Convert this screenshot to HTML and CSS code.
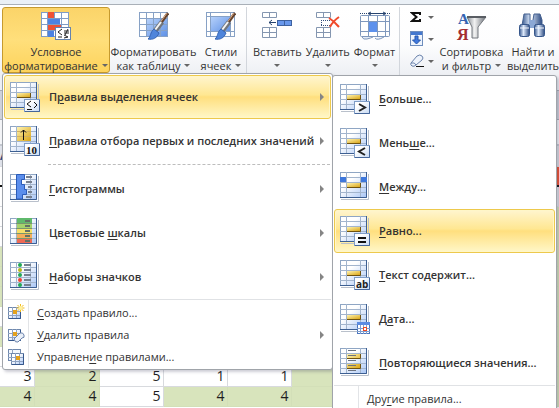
FILE: index.html
```html
<!DOCTYPE html>
<html lang="ru">
<head>
<meta charset="utf-8">
<title>Условное форматирование</title>
<link rel="stylesheet" href="styles.css">
</head>
<body>
<svg class="defs" aria-hidden="true">
  <defs>
    <linearGradient id="sheetFill" x1="0" y1="0" x2="1" y2="1"><stop offset=".35" stop-color="#fff"/><stop offset="1" stop-color="#a9c6f5"/></linearGradient>
    <linearGradient id="gold" x1="0" y1="0" x2="1" y2="1"><stop offset="0" stop-color="#fff3b0"/><stop offset="1" stop-color="#d9a414"/></linearGradient>
    <linearGradient id="blue" x1="0" y1="0" x2="1" y2="1"><stop offset="0" stop-color="#b5d0fa"/><stop offset="1" stop-color="#5f91e6"/></linearGradient>
    <linearGradient id="steel" x1="0" x2="1"><stop offset="0" stop-color="#8a8f96"/><stop offset=".4" stop-color="#f2f2f2"/><stop offset="1" stop-color="#6b7078"/></linearGradient>
    <linearGradient id="tube" x1="0" x2="1"><stop offset="0" stop-color="#38598f"/><stop offset=".4" stop-color="#dce8fa"/><stop offset="1" stop-color="#2c4a80"/></linearGradient>
    <linearGradient id="badgeFill" x1="0" y1="0" x2="1" y2="1"><stop offset=".3" stop-color="#fff"/><stop offset="1" stop-color="#c6d9f3"/></linearGradient>
    <symbol id="grid" viewBox="0 0 30 30">
      <path d="M1 27.500H28.500V2" fill="none" stroke="#b9c0cb"/>
      <rect x=".5" y=".5" width="26" height="25" fill="url(#sheetFill)" stroke="#8fa6c4"/>
      <path d="M6.500 0V26M20.500 0V26M0 5.500H27M0 10.500H27M0 15.500H27M0 20.500H27" stroke="#a3b5cd" fill="none"/>
      <path d="M0 25.500H26.500V0" fill="none" stroke="#3d5f92"/>
    </symbol>
    <symbol id="goldgrid" viewBox="0 0 30 30">
      <use href="#grid" width="30" height="30"/>
      <rect x="7" y="11" width="14" height="4" fill="url(#gold)"/><path d="M7 15.500H20.500V11" fill="none" stroke="#6f5310"/>
    </symbol>
    <symbol id="badge" viewBox="0 0 30 30"><rect x="14.500" y="17.500" width="15" height="12" fill="url(#badgeFill)" stroke="#7e9cc6"/><path d="M15 29.500H29.500V18" fill="none" stroke="#46679b"/></symbol>
    <symbol id="brush" viewBox="0 0 30 30">
      <path d="M19 15 29 1" stroke="#65432d" stroke-width="3"/><path d="M18 15 28 1" stroke="#d8a783"/>
      <path d="M16 19 23 10" stroke="#70757c" stroke-width="5"/><path d="M16 18 22 10" stroke="#f4f4f4" stroke-width="2"/>
      <path d="M9 27C12 25 11 20 15 17L20 21C18 26 14 28 9 27Z" fill="#4f85db" stroke="#3564b4"/>
    </symbol>
    <symbol id="mini" viewBox="0 0 18 18">
      <rect x=".5" y="3.500" width="12" height="11" fill="url(#sheetFill)" stroke="#6f88ad"/><path d="M4.500 3V15M8.500 3V15M0 7.500H13M0 11.500H13" stroke="#8fa3c2"/><path d="M1 14.500H12.500V4" fill="none" stroke="#37588c"/><rect x="5" y="6" width="4" height="4" fill="#e3a11c"/>
    </symbol>
  </defs>
</svg>

<main class="window">
  <header class="ribbon" aria-label="Лента">
    <div class="group styles">
      <button class="tool active w-cond">
        <svg class="big" viewBox="0 0 30 30"><rect x=".5" y=".5" width="27" height="24" fill="#fff" stroke="#7f9cc6"/><rect x="7" y="0" width="6" height="6" fill="#ef5234"/><rect x="7" y="7" width="12" height="5" fill="#4d83e2"/><rect x="7" y="13" width="13" height="5" fill="#ef5234"/><rect x="7" y="19" width="6" height="6" fill="#4d83e2"/><path d="M6.500 0V25M13.500 0V6M20.500 0V25M0 6.500H28M0 12.500H28M0 18.500H28" stroke="#7f9cc6" fill="none"/><rect x="14.500" y="15.500" width="15" height="12" fill="#fff" stroke="#6483af"/><path d="M21 17 17 20 21 23M17 25H21M23 19H28M23 21H28M27 17 24 23M23 23 27 25 23 26" fill="none" stroke="#222"/></svg>
        <span>Условное<br>форматирование<i class="arrow"></i></span>
      </button>
      <button class="tool w-table">
        <svg class="big" viewBox="0 0 30 30"><rect x=".5" y=".5" width="28" height="24" fill="#fff" stroke="#87a1c5"/><rect x="8" y="7" width="20" height="17" fill="url(#blue)"/><path d="M7.500 0V25M14.500 0V25M21.500 0V25M0 6.500H29M0 12.500H29M0 18.500H29" stroke="#87a1c5"/><use href="#brush" width="30" height="30"/></svg>
        <span>Форматировать<br>как таблицу<i class="arrow"></i></span>
      </button>
      <button class="tool w-cell">
        <svg class="big" viewBox="0 0 30 30"><rect x=".5" y=".5" width="28" height="24" fill="#fff" stroke="#87a1c5"/><rect x="5" y="5" width="19" height="15" fill="url(#blue)"/><path d="M4.500 0V25M24.500 0V25M0 4.500H29M0 19.500H29" stroke="#87a1c5"/><use href="#brush" width="30" height="30"/></svg>
        <span>Стили<br>ячеек<i class="arrow"></i></span>
      </button>
    </div>
    <div class="group cells">
      <button class="tool">
        <svg class="big" viewBox="0 0 30 30"><path d="M.5.5H14.500V5.500H.5ZM7.500 0V6M.5 15.500H14.500V25.500H.5ZM7.500 15V26M0 20.500H15" fill="#fff" stroke="#8496b0"/><rect x="15.500" y="8.500" width="14" height="5" fill="#6998ec" stroke="#3e62a0"/><path d="M22.500 8V14" stroke="#3e62a0"/><path d="M14 10.500H7M10 8 7 10.500 10 13" fill="none" stroke="#27446f"/></svg>
        <span>Вставить<br><i class="arrow"></i></span>
      </button>
      <button class="tool">
        <svg class="big" viewBox="0 0 30 30"><path d="M3.500.5H17.500V5.500H3.500ZM10.500 0V6M3.500 15.500H17.500V25.500H3.500ZM10.500 15V26M3 20.500H18" fill="#fff" stroke="#8496b0"/><path d="M8 8.500H18M8 13.500H18M8.500 8V14" stroke="#344e7b" stroke-dasharray="1 1"/><path d="M16 6Q21 9 26 15M26 5Q20 9 17 15" fill="none" stroke="#f04a2b" stroke-width="2"/></svg>
        <span>Удалить<br><i class="arrow"></i></span>
      </button>
      <button class="tool">
        <svg class="big" viewBox="0 0 30 30"><rect x=".5" y="3.500" width="29" height="21" rx="1" fill="#fff" stroke="#7f98bd"/><path d="M8.500 3V25M17.500 3V25M25.500 3V25M0 9.500H30M0 19.500H30" stroke="#7f98bd"/><rect x="9" y="10" width="8" height="10" fill="#5d91ec"/><path d="M8 1.500H26M11 0 8 1.500 11 3M23 0 26 1.500 23 3" fill="none" stroke="#27446f"/><path d="M0 1.500H7M27 1.500H30" stroke="#27446f" stroke-dasharray="1 1"/><path d="M2 25Q3 28 7 27T13 25M15 26Q17 29 24 25" fill="#e3ebf6" stroke="#7f98bd"/></svg>
        <span>Формат<br><i class="arrow"></i></span>
      </button>
    </div>
    <div class="group edit">
      <div class="stack">
        <button class="small" aria-label="Сумма"><svg viewBox="0 0 14 16"><path d="M10 6V4H2L6.500 8 2 12H10V10" fill="none" stroke="#111" stroke-width="2"/></svg><i class="arrow"></i></button>
        <button class="small" aria-label="Заполнить"><svg viewBox="0 0 14 16"><rect x=".5" y=".5" width="12" height="14" fill="#eef4fd" stroke="#6e8dbd"/><rect x="1" y="1" width="11" height="3" fill="#4478cf"/><path d="M5 5H8V9H10.500L6.500 13 2.500 9H5Z" fill="#3f78df" stroke="#2455a8"/></svg><i class="arrow"></i></button>
        <button class="small" aria-label="Очистить"><svg viewBox="0 0 14 16"><path d="M1 10 7 3Q10 1 12 3T12 7L6 12Q4 14 2 13T1 10Z" fill="#eef3fb" stroke="#6d84ac"/><path d="M1 10Q5 9 6 12" fill="none" stroke="#6d84ac"/><path d="M6 13.500H14" stroke="#111"/></svg><i class="arrow"></i></button>
      </div>
      <button class="tool w-sort">
        <svg class="big" viewBox="0 0 30 30"><path d="M10 5H29L21 15V26H15V15Z" fill="url(#steel)" stroke="#74787e"/><path d="M10 5H29" stroke="#595d63" stroke-width="2"/><text x="1" y="12" class="sort-a">А</text><text x="0" y="28" class="sort-ya">Я</text></svg>
        <span>Сортировка<br>и фильтр<i class="arrow"></i></span>
      </button>
      <button class="tool w-find">
        <svg class="big" viewBox="0 0 30 30"><path d="M6 2H12V8L13 13H4L5 8ZM16 2H22L24 8V13H15V8Z" fill="url(#tube)" stroke="#45618f"/><rect x="11" y="8" width="6" height="8" fill="#8ba8d5"/><rect x="1.500" y="12.500" width="10" height="12" rx="2" fill="url(#tube)" stroke="#36568b"/><rect x="16.500" y="12.500" width="10" height="12" rx="2" fill="url(#tube)" stroke="#36568b"/><path d="M2 16H11M17 16H26" stroke="#f2f6fd"/></svg>
        <span>Найти и<br>выделить</span>
      </button>
    </div>
  </header>
  <div class="ribbon-foot"></div>
  <div class="formula-bar"></div>

  <table class="sheet">
    <colgroup><col class="c1"><col class="c2"><col class="c3"><col class="c3"><col class="c3"><col></colgroup>
    <tbody>
      <tr class="head"><th>А</th><td></td><td></td><td></td><td></td><td></td></tr>
      <tr class="title"><td></td><td></td><td></td><td></td><td></td><td class="red"></td></tr>
      <tr><td></td><td></td><td></td><td></td><td></td><td class="pale"></td></tr>
      <tr><td></td><td></td><td></td><td></td><td></td><td class="g"></td></tr>
      <tr><td></td><td></td><td></td><td></td><td></td><td class="g"></td></tr>
      <tr><td class="g"></td><td></td><td></td><td></td><td></td><td class="g"></td></tr>
      <tr><td class="g"></td><td></td><td></td><td></td><td></td><td class="g"></td></tr>
      <tr><td class="g"></td><td></td><td></td><td></td><td></td><td class="g"></td></tr>
      <tr><td></td><td></td><td></td><td></td><td></td><td class="g"></td></tr>
      <tr><td class="g"></td><td></td><td></td><td></td><td></td><td class="g"></td></tr>
      <tr><td></td><td></td><td></td><td></td><td></td><td class="g"></td></tr>
      <tr><td>3</td><td class="g">2</td><td>5</td><td>1</td><td>1</td><td class="g"></td></tr>
      <tr><td class="g">4</td><td class="g">4</td><td>5</td><td class="g">4</td><td class="g">4</td><td class="g"></td></tr>
    </tbody>
  </table>

  <nav class="menu main-menu" aria-label="Условное форматирование">
    <button class="item hot"><svg viewBox="0 0 30 30"><use href="#goldgrid"/><use href="#badge"/><path d="M21 19 17 22 21 25M17 27.500H22M24 20 27 23 24 26" fill="none" stroke="#111"/></svg><span>П<u>р</u>авила выделения ячеек</span><i class="more"></i></button>
    <button class="item"><svg viewBox="0 0 30 30"><use href="#grid"/><rect x="7" y="1" width="14" height="14" fill="url(#gold)"/><path d="M7 5.500H21M7 10.500H21" stroke="#d1b162"/><path d="M13.500 14V4M11 6.500 13.500 4 16 6.500" fill="none" stroke="#111"/><use href="#badge"/><text x="16" y="28" class="ten">10</text></svg><span><u>П</u>равила отбора первых и последних значений</span><i class="more"></i></button>
    <hr class="dashed">
    <button class="item"><svg viewBox="0 0 30 30"><use href="#grid"/><path d="M6.500.5H14.500V5.500H11.500V10.500H14.500V15.500H16.500V20.500H12.500V25H6.500Z" fill="#5b8eec" stroke="#2a5bb8"/><path d="M16 3H22M16 8H22M18 13H22M18 18H22M16 23H22" stroke="#77808f" stroke-width="2"/></svg><span><u>Г</u>истограммы</span><i class="more"></i></button>
    <button class="item"><svg viewBox="0 0 30 30"><use href="#grid"/><path d="M7 0H22V5H7Z" fill="#5fb96c"/><path d="M7 5H22V10H7Z" fill="#a5d36d"/><path d="M7 10H22V15H7Z" fill="#f6df69"/><path d="M7 15H22V20H7Z" fill="#f5ae5b"/><path d="M7 20H22V25H7Z" fill="#ee6a55"/><path d="M6 5.500H22M6 10.500H22M6 15.500H22M6 20.500H22" stroke="#78966d"/><path d="M15 3H20M15 8H20M15 13H20M15 18H20M15 23H20" stroke="#657066" stroke-width="2"/></svg><span>Цветовые <u>ш</u>калы</span><i class="more"></i></button>
    <button class="item"><svg viewBox="0 0 30 30"><use href="#grid"/><g fill="#23a856"><circle cx="10" cy="3" r="2"/><circle cx="10" cy="13" r="2"/><circle cx="10" cy="23" r="2"/></g><circle cx="10" cy="8" r="2" fill="#b9b51c"/><circle cx="10" cy="18" r="2" fill="#f04432"/><path d="M14 3H21M14 8H21M14 13H21M14 18H21M14 23H21" stroke="#77808f" stroke-width="2"/></svg><span><u>Н</u>аборы значков</span><i class="more"></i></button>
    <div class="plain">
      <button class="row"><svg viewBox="0 0 18 18"><use href="#mini"/><path d="M12.500 0V8M8.500 4H16.500M9.500 1 15.500 7M15.500 1 9.500 7" stroke="#f3bd23"/><circle cx="12.500" cy="4" r="2" fill="#fff2a0"/></svg><span><u>С</u>оздать правило...</span></button>
      <button class="row"><svg viewBox="0 0 18 18"><use href="#mini"/><path d="M6 13 12 7Q15 6 16 9T14 12L10 16Q7 17 6 13Z" fill="#e9eff8" stroke="#6d84ac"/></svg><span><u>У</u>далить правила</span><i class="more"></i></button>
      <button class="row"><svg viewBox="0 0 18 18"><rect x=".5" y="1.500" width="12" height="11" fill="#f4f8fe" stroke="#6f88ad"/><path d="M4.500 1V13M0 5.500H12M0 9.500H12" stroke="#8fa3c2"/><use href="#mini" x="3" y="2" width="18" height="18"/></svg><span>Управлен<u>и</u>е правилами...</span></button>
    </div>
  </nav>

  <nav class="menu sub-menu" aria-label="Правила выделения ячеек">
    <button class="item"><svg viewBox="0 0 30 30"><use href="#goldgrid"/><use href="#badge"/><path d="M19 20 25 23.500 19 27" fill="none" stroke="#222" stroke-width="2"/></svg><span><u>Б</u>ольше...</span></button>
    <button class="item"><svg viewBox="0 0 30 30"><use href="#goldgrid"/><use href="#badge"/><path d="M25 20 19 23.500 25 27" fill="none" stroke="#222" stroke-width="2"/></svg><span>Мень<u>ш</u>е...</span></button>
    <button class="item"><svg viewBox="0 0 30 30"><use href="#goldgrid"/><path d="M0 5H6V10H0ZM21 5H27V10H21Z" fill="#3e78dc"/></svg><span><u>М</u>ежду...</span></button>
    <button class="item hot"><svg viewBox="0 0 30 30"><use href="#goldgrid"/><use href="#badge"/><path d="M18 22H26M18 26H26" stroke="#111" stroke-width="2"/></svg><span><u>Р</u>авно...</span></button>
    <button class="item"><svg viewBox="0 0 30 30"><use href="#goldgrid"/><use href="#badge"/><text x="16" y="28" class="ab">ab</text></svg><span><u>Т</u>екст содержит...</span></button>
    <button class="item"><svg viewBox="0 0 30 30"><use href="#goldgrid"/><rect x="17.500" y="18.500" width="12" height="11" fill="#fff" stroke="#4c76bd"/><path d="M17 18H30V21H17Z" fill="#5c8ce2"/><path d="M20.500 21V30M23.500 21V30M26.500 21V30M17 24.500H30M17 27.500H30" stroke="#7f9ed0"/><rect x="23.500" y="23.500" width="3" height="3" fill="#fff" stroke="#ef4a24"/></svg><span>Д<u>а</u>та...</span></button>
    <button class="item"><svg viewBox="0 0 30 30"><use href="#grid"/><path d="M7 6H21V10H7ZM7 16H21V20H7Z" fill="url(#gold)"/><path d="M7 10.500H20.500V6M7 20.500H20.500V16" fill="none" stroke="#6f5310"/><path d="M8 2.500H16M8 7.500H16M8 12.500H16M8 17.500H16M8 22.500H16" stroke="#6d7480"/></svg><span><u>П</u>овторяющиеся значения...</span></button>
    <div class="plain">
      <button class="row"><svg viewBox="0 0 18 18"></svg><span>Дру<u>г</u>ие правила...</span></button>
    </div>
  </nav>
</main>
</body>
</html>
```

FILE: styles.css
```css
* { box-sizing: border-box; }
body { margin: 0; background: #fff; color: #333; font: 11px/14px "Open Sans", "Noto Sans", sans-serif; }
button { border: 0; margin: 0; padding: 0; background: none; color: inherit; font: inherit; }
.defs { position: absolute; width: 0; height: 0; }
.window { position: relative; height: 100vh; overflow: hidden; }

.ribbon { display: flex; height: 90px; padding-top: 3px; border-top: 4px solid #eaf0f6; background: linear-gradient(#a9b0b8 1px, #fff 1px, #fdfdfe 40px, #eef0f4 70px); overflow: hidden; }
.group { display: flex; flex: none; height: 72px; border-right: 1px solid #d2d6dc; }
.styles { width: 247px; padding-left: 2px; }
.cells { width: 153px; padding-left: 4px; }
.edit { border: 0; padding-left: 10px; }
.tool { display: flex; flex: none; flex-direction: column; align-items: center; height: 66px; padding-top: 5px; gap: 3px; white-space: nowrap; }
.cells .tool { padding-left: 2px; padding-right: 2px; }
.w-cond { width: 108px; }
.w-table { width: 87px; }
.w-cell { width: 48px; }
.w-sort { width: 71px; }
.w-find { width: 52px; }
.tool.active { border: 1px solid #c69a2e; border-radius: 3px; padding-top: 4px; background: linear-gradient(#fbd469, #ffdf7b 50%, #fdd35c); }
.big { width: 30px; height: 30px; flex: none; overflow: visible; }
.arrow { display: inline-block; margin-left: 4px; border: 3px solid transparent; border-top-color: #666; border-bottom: 0; vertical-align: 3px; }
.cells .arrow { margin-left: 0; }
.stack { display: flex; flex-direction: column; gap: 6px; width: 26px; padding-top: 2px; }
.small { display: flex; align-items: center; height: 16px; gap: 4px; }
.small svg { width: 14px; height: 16px; flex: none; }
.small .arrow { margin: 0; }
.sort-a { font: bold 15px "Liberation Serif", serif; fill: #3464b2; }
.sort-ya { font: bold 16px "Liberation Serif", serif; fill: #a32e31; }
.ten { font: bold 11px "Liberation Serif", serif; fill: #111; }
.ab { font: bold 10px "Open Sans", sans-serif; fill: #222; }

.ribbon-foot { height: 30px; background: #cfd2da; border: 1px solid #a9adb6; border-width: 1px 0; }
.formula-bar { height: 26px; background: #f4f5f8; border-bottom: 2px solid #c4c8d0; }
.sheet { width: 100%; table-layout: fixed; border-collapse: collapse; color: #1e1e1e; font-size: 14px; line-height: 18px; }
.c1 { width: 34px; }
.c2 { width: 65px; }
.c3 { width: 64px; }
.sheet td, .sheet th { height: 20px; padding: 0 2px; border: 1px solid #d8dade; border-width: 0 1px 1px 0; background: #fff; text-align: right; overflow: hidden; }
.sheet .head td, .sheet .head th { background: #dfe2ea; }
.sheet .head th { color: #2c4a80; font-size: 11px; text-align: left; padding: 0; }
.sheet .title td { border-bottom: 2px solid #111; }
.sheet .title .red { background: #ee5232; border-right-color: #ee5232; }
.sheet .pale { background: #e9e8f0; }
.sheet .g { background: #d8e4bc; border-color: #d3dfb8; }

.menu { position: absolute; display: flex; flex-direction: column; padding: 1px; border: 1px solid #a0a4aa; border-radius: 3px; background: #fff; box-shadow: 2px 2px 3px rgba(60, 60, 90, .25); }
.main-menu { top: 73px; left: 2px; width: 331px; }
.sub-menu { top: 75px; left: 332px; width: 225px; }
.item { display: flex; align-items: center; flex: none; height: 44px; padding: 0 6px 0 5px; border: 1px solid transparent; border-radius: 3px; font-weight: 600; text-align: left; white-space: nowrap; }
.item svg { width: 30px; height: 30px; margin-right: 9px; flex: none; }
.item span, .row span { flex: 1; }
.hot { border-color: #edc94c; background: linear-gradient(#fff5cf, #ffe792 45%, #ffdf7e 50%, #fff7c8); box-shadow: inset 0 0 0 1px #fff6c9; }
.more { border: 4px solid transparent; border-left: 4px solid #858585; border-right: 0; }
u { text-underline-offset: 2px; }
.dashed { width: auto; margin: 1px 1px 2px 44px; border: 0; border-top: 1px dashed #bdbdbd; }
.plain { border-top: 1px solid #e0e2e5; padding-top: 2px; background: linear-gradient(90deg, transparent 24px, #e2e4e7 24px, #e2e4e7 25px, transparent 25px); }
.row { display: flex; align-items: center; width: 100%; height: 22px; padding: 0 7px 0 4px; text-align: left; white-space: nowrap; }
.row svg { width: 18px; height: 18px; margin-right: 11px; flex: none; }
```
